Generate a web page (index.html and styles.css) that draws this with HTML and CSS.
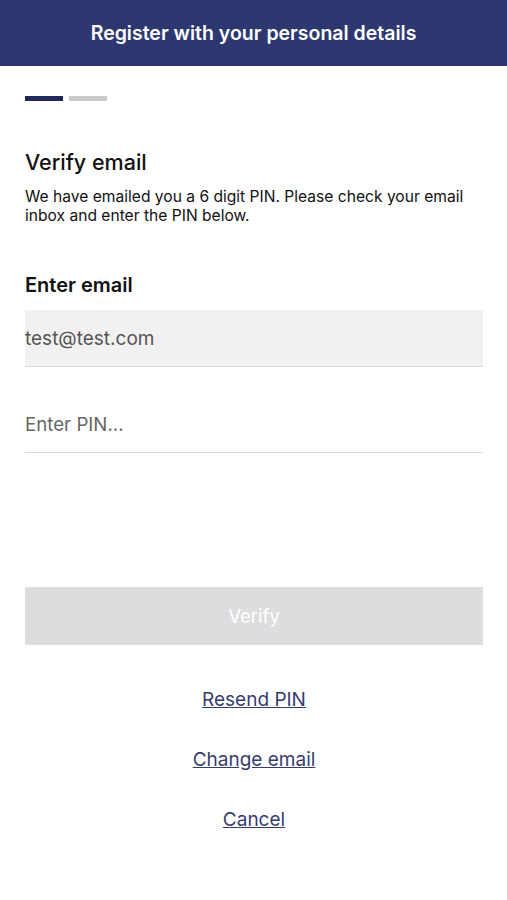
FILE: index.html
```html
<!DOCTYPE html>
<html lang="en">
<head>
    <meta charset="UTF-8">
    <meta name="viewport" content="width=device-width, initial-scale=1.0">
    <title>Verify email</title>
    <link rel="stylesheet" href="styles.css">
</head>
<body>

<header class="topbar">
    <h1>Register with your personal details</h1>
</header>

<main class="page">
    <div class="steps">
        <span class="step active"></span>
        <span class="step"></span>
    </div>

    <h2 class="title">Verify email</h2>
    <p class="intro">We have emailed you a 6 digit PIN. Please check your email inbox and enter the PIN below.</p>

    <label class="label" for="email">Enter email</label>
    <input class="field field-filled" id="email" type="text" value="test@test.com" readonly>
    <input class="field" id="pin" type="text" placeholder="Enter PIN...">

    <button class="verify" disabled>Verify</button>

    <nav class="links">
        <a href="#">Resend PIN</a>
        <a href="#">Change email</a>
        <a href="#">Cancel</a>
    </nav>
</main>

</body>
</html>
```

FILE: styles.css
```css
body {
    margin: 0;
    font-family: Inter, "Liberation Sans", Arial, sans-serif;
    background: #fff;
    color: #111;
}

/* Barre du haut */
.topbar {
    background-color: #2e3870;
    height: 66px;
    display: flex;
    align-items: center;
    justify-content: center;
}

.topbar h1 {
    margin: 0;
    color: #fff;
    font-size: 19.5px;
    font-weight: 600;
}

.page {
    padding: 0 24px 0 25px;
    display: flex;
    flex-direction: column;
}

/* Indicateur d'étapes */
.steps {
    display: flex;
    gap: 6px;
    margin-top: 30px;
}

.step {
    width: 38px;
    height: 5px;
    background-color: #c9c9c9;
}

.step.active {
    background-color: #1f2a5a;
}

.title {
    margin: 48px 0 0;
    font-size: 21.5px;
    font-weight: 500;
    line-height: 26px;
}

.intro {
    margin: 12px 0 0;
    font-size: 15.6px;
    line-height: 19px;
}

.label {
    margin-top: 49px;
    font-size: 20px;
    font-weight: 600;
    line-height: 22px;
}

/* Champs */
.field {
    box-sizing: border-box;
    width: 100%;
    height: 57px;
    margin: 0;
    padding: 0;
    border: none;
    border-bottom: 1px solid #d9d9d9;
    background: transparent;
    font-family: inherit;
    font-size: 19px;
    color: #555;
    outline: none;
}

.field-filled {
    margin-top: 14px;
    background-color: #f1f1f1;
}

#pin {
    margin-top: 29px;
    font-size: 18.7px;
}

#pin::placeholder {
    color: #666;
}

.verify {
    margin-top: 134px;
    height: 58px;
    border: none;
    background-color: #dcdddf;
    color: #fff;
    font-family: inherit;
    font-size: 18.5px;
}

/* Liens */
.links {
    display: flex;
    flex-direction: column;
    align-items: center;
    gap: 37px;
    margin-top: 43px;
}

.links a {
    color: #363d6e;
    font-size: 19px;
    line-height: 23px;
}
```
